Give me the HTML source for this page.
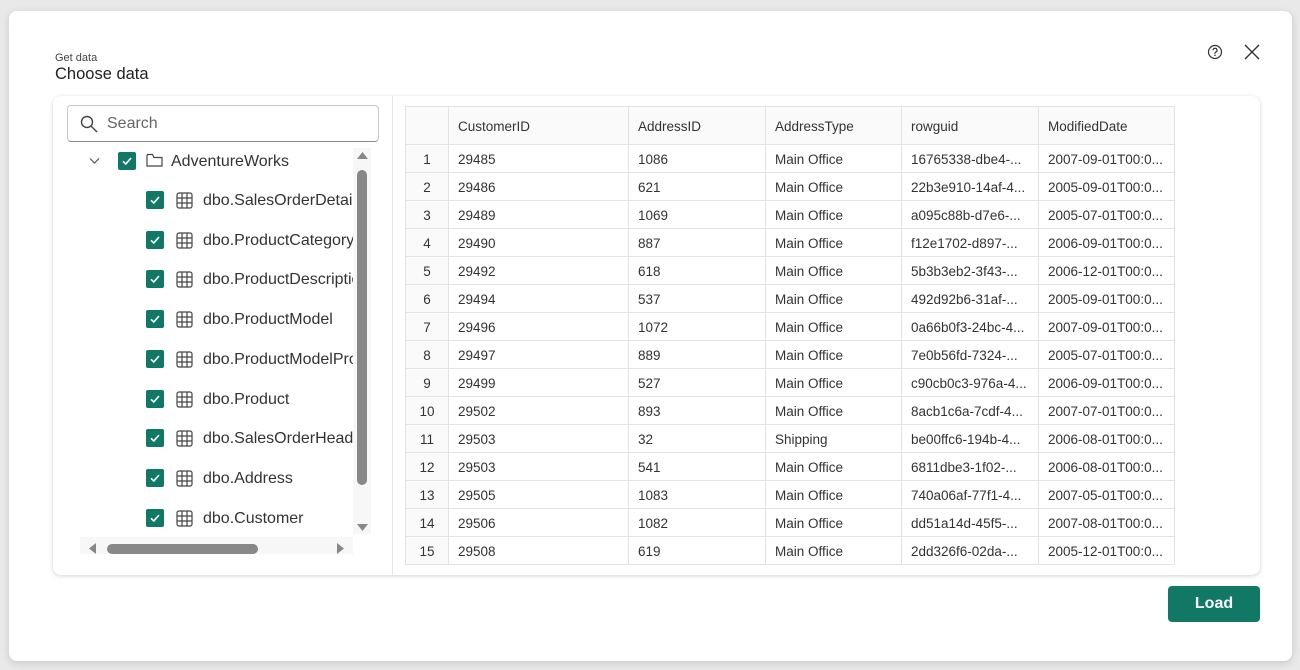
<!DOCTYPE html>
<html><head><style>
*{box-sizing:border-box;margin:0;padding:0}
body{width:1300px;height:670px;background:#e9e9e9;font-family:"Segoe UI","Liberation Sans",sans-serif;position:relative;overflow:hidden;color:#242424}
.dlg{position:absolute;left:9px;top:11px;width:1283px;height:650px;background:#fff;border-radius:8px;box-shadow:0 2px 8px rgba(0,0,0,.15)}
.card{position:absolute;left:44px;top:85px;width:1207px;height:479px;background:#fff;border-radius:8px;box-shadow:0 1px 4px rgba(0,0,0,.18);overflow:hidden}
.abs{position:absolute}
.cb{position:absolute;width:18px;height:18px;background:#117865;border-radius:2px}
.cb svg{position:absolute;left:3px;top:3px}
.item{position:absolute;font-size:16px;color:#333;white-space:nowrap;overflow:hidden}
table{position:absolute;left:352px;top:10px;border-collapse:collapse;font-size:13.5px;color:#333;table-layout:fixed;width:769px}
td{border:1px solid #e3e3e3;height:28px;padding:2px 9px 0;white-space:nowrap;overflow:hidden}
tr.h td{height:38px;background:#fafafa}
td.n{text-align:center;background:#fafafa;padding:2px 0 0}
</style></head><body>
<div class="dlg">
<div class="abs" style="left:46px;top:41px;font-size:11px;color:#444">Get data</div>
<div class="abs" style="left:46px;top:54px;font-size:16.5px;font-weight:500;color:#222">Choose data</div>
<svg class="abs" style="left:1198px;top:33px" width="16" height="16" viewBox="0 0 16 16"><circle cx="8" cy="8" r="6.5" fill="none" stroke="#333" stroke-width="1.2"/><path d="M6 6.3a2 2 0 1 1 2.6 1.9c-.4.2-.6.5-.6 1v.6" fill="none" stroke="#333" stroke-width="1.2"/><circle cx="8" cy="11.3" r=".8" fill="#333"/></svg>
<svg class="abs" style="left:1235px;top:33px" width="16" height="16" viewBox="0 0 16 16"><path d="M1 1L15 15M15 1L1 15" stroke="#333" stroke-width="1.4"/></svg>
<div class="card">
  <div class="abs" style="left:14px;top:9px;width:312px;height:37px;border:1px solid #c8c8c8;border-bottom:1px solid #888;border-radius:4px"></div>
  <svg class="abs" style="left:27px;top:19px" width="18" height="18" viewBox="0 0 18 18"><circle cx="7" cy="7" r="5.5" fill="none" stroke="#444" stroke-width="1.4"/><path d="M11 11L17 17" stroke="#444" stroke-width="1.4"/></svg>
  <div class="abs" style="left:54px;top:19px;font-size:16px;color:#666">Search</div>
  <div class="abs" style="left:339px;top:0;width:1px;height:479px;background:#e6e6e6"></div>
  <svg class="abs" style="left:36px;top:61px" width="11" height="8" viewBox="0 0 11 8"><path d="M1 1.5L5.5 6L10 1.5" fill="none" stroke="#555" stroke-width="1.2"/></svg>
  <div class="cb" style="left:65px;top:56px"><svg width="12" height="12" viewBox="0 0 12 12"><path d="M2 6.3L4.8 9L10 3" fill="none" stroke="#fff" stroke-width="1.6"/></svg></div>
  <svg class="abs" style="left:93px;top:57px" width="17" height="15" viewBox="0 0 17 15"><path d="M1 2.5V13h15V4.5H8L6.5 1.5H1.5Z" fill="none" stroke="#444" stroke-width="1.2"/></svg>
  <div class="item" style="left:118px;top:57px">AdventureWorks</div>
  <div id="items"></div>
  <div class="abs" style="left:300px;top:52px;width:18px;height:386px;background:#f7f7f7"></div>
  <svg class="abs" style="left:304px;top:55px" width="11" height="9"><path d="M0 8L5.5 1L11 8Z" fill="#888"/></svg>
  <div class="abs" style="left:304px;top:74px;width:10px;height:315px;background:#888;border-radius:5px"></div>
  <svg class="abs" style="left:304px;top:427px" width="11" height="9"><path d="M0 1L5.5 8L11 1Z" fill="#888"/></svg>
  <div class="abs" style="left:27px;top:441px;width:273px;height:17px;background:#f7f7f7"></div>
  <svg class="abs" style="left:35px;top:447px" width="9" height="11"><path d="M8 0L1 5.5L8 11Z" fill="#888"/></svg>
  <div class="abs" style="left:54px;top:448px;width:151px;height:10px;background:#888;border-radius:5px"></div>
  <svg class="abs" style="left:283px;top:447px" width="9" height="11"><path d="M1 0L8 5.5L1 11Z" fill="#888"/></svg>
  <table id="t"></table>
</div>
<div class="abs" style="left:1159px;top:575px;width:92px;height:36px;background:#117865;border-radius:4px;color:#fff;font-size:16px;font-weight:600;text-align:center;line-height:36px">Load</div>
</div>
<script>
var names=["dbo.SalesOrderDetail","dbo.ProductCategory","dbo.ProductDescription","dbo.ProductModel","dbo.ProductModelProductDescription","dbo.Product","dbo.SalesOrderHeader","dbo.Address","dbo.Customer"];
var h="";names.forEach(function(n,i){var y=95+i*39.7;
h+='<div class="cb" style="left:93px;top:'+y+'px"><svg width="12" height="12" viewBox="0 0 12 12"><path d="M2 6.3L4.8 9L10 3" fill="none" stroke="#fff" stroke-width="1.6"/></svg></div>';
h+='<svg class="abs" style="left:123px;top:'+(y+1)+'px" width="17" height="17" viewBox="0 0 17 17"><rect x="1" y="1" width="15" height="15" rx="2" fill="none" stroke="#444" stroke-width="1.2"/><path d="M6 1V16M11 1V16M1 6H16M1 11H16" stroke="#444" stroke-width="1.2"/></svg>';
h+='<div class="item" style="left:150px;top:'+(y+1)+'px;width:153px">'+n+'</div>';});
document.getElementById("items").outerHTML=h;
var d=[["29485","1086","Main Office","16765338-dbe4-...","2007-09-01T00:0..."],["29486","621","Main Office","22b3e910-14af-4...","2005-09-01T00:0..."],["29489","1069","Main Office","a095c88b-d7e6-...","2005-07-01T00:0..."],["29490","887","Main Office","f12e1702-d897-...","2006-09-01T00:0..."],["29492","618","Main Office","5b3b3eb2-3f43-...","2006-12-01T00:0..."],["29494","537","Main Office","492d92b6-31af-...","2005-09-01T00:0..."],["29496","1072","Main Office","0a66b0f3-24bc-4...","2007-09-01T00:0..."],["29497","889","Main Office","7e0b56fd-7324-...","2005-07-01T00:0..."],["29499","527","Main Office","c90cb0c3-976a-4...","2006-09-01T00:0..."],["29502","893","Main Office","8acb1c6a-7cdf-4...","2007-07-01T00:0..."],["29503","32","Shipping","be00ffc6-194b-4...","2006-08-01T00:0..."],["29503","541","Main Office","6811dbe3-1f02-...","2006-08-01T00:0..."],["29505","1083","Main Office","740a06af-77f1-4...","2007-05-01T00:0..."],["29506","1082","Main Office","dd51a14d-45f5-...","2007-08-01T00:0..."],["29508","619","Main Office","2dd326f6-02da-...","2005-12-01T00:0..."]];
var w=[43,180,137,136,137,136];
var t='<colgroup>';w.forEach(function(x){t+='<col style="width:'+x+'px">'});t+='</colgroup><tr class="h">';["","CustomerID","AddressID","AddressType","rowguid","ModifiedDate"].forEach(function(c,i){t+='<td>'+c+'</td>'});t+='</tr>';
d.forEach(function(r,i){t+='<tr><td class="n">'+(i+1)+'</td>';r.forEach(function(c){t+='<td>'+c+'</td>'});t+='</tr>'});
document.getElementById("t").innerHTML=t;
</script>
</body></html>
